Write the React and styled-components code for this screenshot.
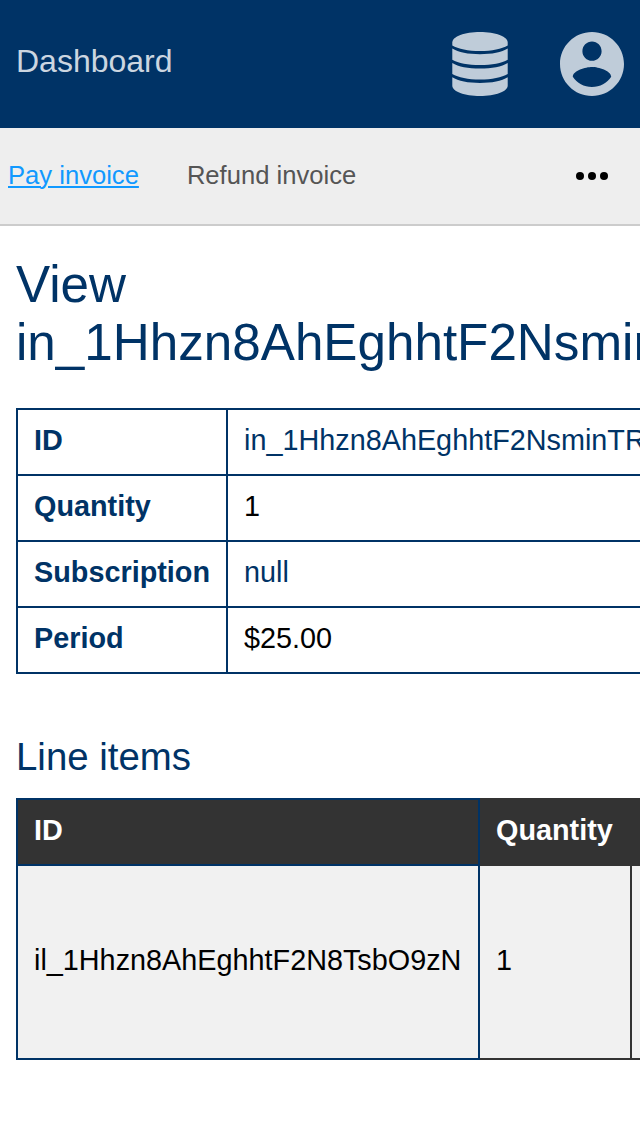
import React from "react";
import styled, { createGlobalStyle } from "styled-components";

const Global = createGlobalStyle`
  * { box-sizing: border-box; }
  body {
    margin: 0;
    background: #fff;
    color: #000;
    font: 28.8px "Liberation Sans", Arial, sans-serif;
    overflow: hidden;
  }
`;

const Page = styled.div`
  width: 100%;
  height: 1136px;
  overflow: hidden;
`;

const Header = styled.header`
  display: flex;
  align-items: center;
  justify-content: space-between;
  height: 128px;
  padding: 0 16px;
  background: #003366;
`;

const Brand = styled.a`
  color: #ccd6e0;
  font-size: 32px;
  padding-bottom: 6px;
`;

const HeaderIcons = styled.div`
  display: flex;
  align-items: center;
  gap: 52px;
`;

const Icon = styled.svg`
  display: block;
  width: ${(p) => p.$w}px;
  height: ${(p) => p.$h}px;
  fill: ${(p) => p.$color || "#bfccd9"};
`;

const Nav = styled.nav`
  display: flex;
  align-items: center;
  gap: 48px;
  height: 98px;
  padding: 0 32px 2px 8px;
  background: #eee;
  border-bottom: 2px solid #ccc;
  font-size: 25.6px;
`;

const NavLink = styled.a`
  color: ${(p) => (p.$active ? "#1199ff" : "#555")};
  text-decoration: ${(p) => (p.$active ? "underline" : "none")};
  text-decoration-thickness: 2px;
  text-underline-offset: 2px;
`;

const More = styled.span`
  margin-left: auto;
  padding-top: 2px;
`;

const Main = styled.main`
  padding: 30px 16px 0;
`;

const Title = styled.h1`
  margin: 0 0 36px;
  color: #003366;
  font-size: 51.2px;
  font-weight: 400;
  line-height: 58px;
`;

const Subtitle = styled.h2`
  margin: 60px 0 18px;
  color: #003366;
  font-size: 38.4px;
  font-weight: 400;
  line-height: 46px;
`;

const Table = styled.table`
  width: ${(p) => p.$width}px;
  table-layout: fixed;
  border-collapse: collapse;
`;

const Col = styled.col`
  width: ${(p) => p.$width}px;
`;

const Cell = styled.td`
  height: ${(p) => p.$h || 66}px;
  padding: 0 16px 4px;
  border: 2px solid ${(p) => p.$line || "#003366"};
  background: ${(p) => p.$bg || "transparent"};
  color: ${(p) => p.$color || "#000"};
  font-weight: ${(p) => (p.$bold ? 700 : 400)};
  text-align: left;
  vertical-align: middle;
  white-space: nowrap;
`;

const details = [
  ["ID", "in_1Hhzn8AhEghhtF2NsminTR", true],
  ["Quantity", "1", false],
  ["Subscription", "null", true],
  ["Period", "$25.00", false],
];

export default function App() {
  return (
    <Page>
      <Global />
      <Header>
        <Brand>Dashboard</Brand>
        <HeaderIcons>
          <Icon $w={56} $h={64} viewBox="-0.3 0 56.6 64" preserveAspectRatio="none">
            <path d="M0 10.5C0 4.500 12.500 0 28 0s28 4.500 28 10.500v3C50 17 40 19 28 19S6 17 0 13.500z" />
            <path d="M0 16.500C6 20.300 16 22.200 28 22.200s22-1.900 28-5.700v11.200C50 31.200 40 33 28 33S6 31.200 0 27.700z" />
            <path d="M0 30.900C6 34.700 16 36.500 28 36.500s22-1.800 28-5.600v11.200C50 45.600 40 47.600 28 47.600S6 45.600 0 42.100z" />
            <path d="M0 45.300C6 49.100 16 51 28 51s22-1.900 28-5.700v8.400C56 59.500 43.500 64 28 64S0 59.500 0 53.700z" />
          </Icon>
          <Icon $w={64} $h={64} viewBox="2 2 20 20">
            <path d="M12 2C6.480 2 2 6.480 2 12s4.480 10 10 10 10-4.480 10-10S17.520 2 12 2zm0 3c1.660 0 3 1.340 3 3s-1.340 3-3 3-3-1.340-3-3 1.340-3 3-3zm0 14.200c-2.500 0-4.710-1.280-6-3.220.03-1.990 4-3.080 6-3.080 1.990 0 5.970 1.090 6 3.080-1.290 1.940-3.500 3.220-6 3.220z" />
          </Icon>
        </HeaderIcons>
      </Header>
      <Nav>
        <NavLink $active>Pay invoice</NavLink>
        <NavLink>Refund invoice</NavLink>
        <More>
          <Icon $w={32} $h={8} $color="#000" viewBox="0 0 32 8">
            <circle cx="4" cy="4" r="4" />
            <circle cx="16" cy="4" r="4" />
            <circle cx="28" cy="4" r="4" />
          </Icon>
        </More>
      </Nav>
      <Main>
        <Title>View in_1Hhzn8AhEghhtF2NsminTR</Title>
        <Table $width={720}>
          <colgroup>
            <Col $width={210} />
            <col />
          </colgroup>
          <tbody>
            {details.map(([label, value, linked]) => (
              <tr key={label}>
                <Cell as="th" $bold $color="#003366">{label}</Cell>
                <Cell $color={linked ? "#003366" : "#000"}>{value}</Cell>
              </tr>
            ))}
          </tbody>
        </Table>
        <Subtitle>Line items</Subtitle>
        <Table $width={900}>
          <colgroup>
            <Col $width={462} />
            <Col $width={152} />
            <col />
          </colgroup>
          <thead>
            <tr>
              <Cell as="th" $bold $bg="#333" $color="#fff">ID</Cell>
              <Cell as="th" $bold $bg="#333" $color="#fff" $line="#333">Quantity</Cell>
              <Cell as="th" $bg="#333" $line="#333" />
            </tr>
          </thead>
          <tbody>
            <tr>
              <Cell $h={194} $bg="#f1f1f1">il_1Hhzn8AhEghhtF2N8TsbO9zN</Cell>
              <Cell $h={194} $bg="#f1f1f1" $line="#333">1</Cell>
              <Cell $h={194} $bg="#f1f1f1" $line="#333" />
            </tr>
          </tbody>
        </Table>
      </Main>
    </Page>
  );
}
